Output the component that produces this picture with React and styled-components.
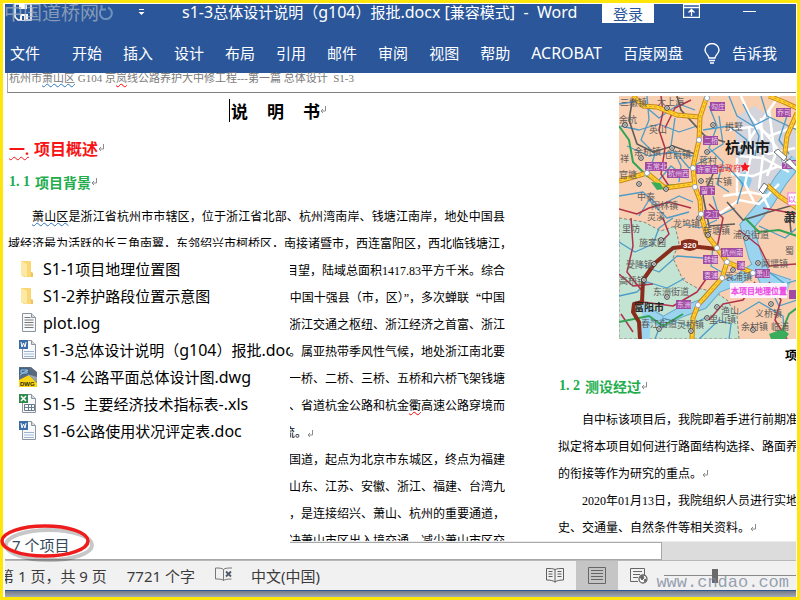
import React from "react";
import styled, { createGlobalStyle, css } from "styled-components";

const GlobalStyle = createGlobalStyle`
  * { box-sizing: border-box; }
  html, body { margin: 0; padding: 0; overflow: hidden; }
  body { font-family: "Noto Sans", "Noto Sans CJK SC", sans-serif; font-size: 15px; color: #000; }
  button { font: inherit; color: inherit; background: none; border: 0; padding: 0; margin: 0; white-space: nowrap; }
  svg { flex: none; }
`;

const BLUE = "#2b579a";

const Frame = styled.div`
  display: flex;
  flex-direction: column;
  height: 100vh;
  border: 3px solid #ffe60a;
  padding: 1px 1px 0 2px;
  background: #fff;
  position: relative;
`;

const Ribbon = styled.header`
  background: ${BLUE};
  color: #fff;
  flex: none;
`;

const TitleBar = styled.div`
  display: flex;
  align-items: flex-start;
  height: 29px;
  padding-left: 9px;
`;

const QuickTools = styled.div`
  display: flex;
  align-items: center;
  height: 17px;
  width: 168px;
`;

const ToolButton = styled.button`
  display: flex;
  align-items: center;
  margin-right: ${(p) => p.$after || 0}px;
`;

const Title = styled.h1`
  margin: 0;
  font-size: 15px;
  font-weight: 400;
  line-height: 17px;
  white-space: pre;
  flex: none;
`;

const Latin = styled.span`
  font-size: 16px;
`;

const WindowTools = styled.div`
  display: flex;
  align-items: flex-start;
  margin-left: auto;
  padding-right: 40px;
`;

const LoginButton = styled.button`
  width: 52px;
  height: 19px;
  background: #fff;
  color: ${BLUE};
  line-height: 16px;
  margin-right: 29px;
`;

const Menu = styled.nav`
  display: flex;
  align-items: center;
  height: 40px;
  gap: 21px;
  padding-left: 5px;
`;

const MenuItem = styled.button`
  display: flex;
  align-items: center;
  gap: 12px;
  line-height: 20px;
  margin-right: ${(p) => (p.$first ? 11 : 0)}px;
`;

const RunningHead = styled.div`
  flex: none;
  height: 20px;
  margin-left: 2px;
  padding-left: 1px;
  border-left: 1px solid #aaa;
  border-bottom: 1px solid #808080;
  color: #7a7a7a;
  font-family: "Liberation Serif", "Noto Sans CJK SC", sans-serif;
  font-size: 11px;
  line-height: 11px;
  white-space: pre;
`;

const Wavy = styled.span`
  text-decoration: underline wavy ${(p) => p.$tone} 1px;
  text-underline-offset: 1px;
`;

const Workspace = styled.main`
  flex: 1;
  min-height: 0;
  display: flex;
  flex-direction: column;
  position: relative;
`;

const Page = styled.article`
  flex: 1;
  min-height: 0;
  overflow: hidden;
  display: grid;
  grid-template-columns: minmax(0, 497fr) minmax(0, 238fr);
  column-gap: 53px;
  padding-left: 3px;
  font-family: "Liberation Serif", "Noto Sans CJK SC", serif;
`;

const Column = styled.section`
  min-width: 0;
  overflow: hidden;
  padding-top: ${(p) => p.$top}px;
`;

const DocTitle = styled.h2`
  display: flex;
  align-items: center;
  margin: 0 0 8px 221px;
  height: 26px;
  font-size: 17px;
  gap: 19px;
`;

const Caret = styled.i`
  width: 1px;
  height: 23px;
  background: #000;
  margin-right: -18px;
`;

const Marked = styled.span`
  display: inline-flex;
  align-items: center;
`;

const Heading = styled.h3`
  display: flex;
  align-items: center;
  margin: 0 0 ${(p) => p.$after || 0}px;
  height: ${(p) => p.$height}px;
  font-size: ${(p) => p.$size}px;
  gap: 5px;
  padding-left: 1px;
  color: ${(p) => p.$tone};
`;

const Line = styled.p`
  margin: 0;
  height: 27px;
  font-size: 12px;
  line-height: 27px;
  white-space: nowrap;
  padding-left: ${(p) => (p.$indent ? 24 : 0)}px;
  ${(p) => p.$fill && css`text-align-last: justify; white-space: normal;`}
  ${(p) => p.$end && css`display: flex; justify-content: flex-end;`}
`;

const WideQuote = styled.span`
  font-family: "Noto Sans CJK SC", sans-serif;
`;

const Tail = styled.span`
  display: flex;
  align-items: center;
  width: 222px;
`;

const MapFigure = styled.figure`
  margin: 0 0 0 61px;
`;

const MapDrawing = styled.svg`
  display: block;
  width: 178px;
  height: 243px;
`;

const Caption = styled.figcaption`
  padding-left: 166px;
  font-size: 12px;
  font-weight: 700;
  line-height: 34px;
  white-space: nowrap;
`;

const ScrollTrack = styled.div`
  flex: none;
  height: 19px;
  background: #dcdcdc;
  border-top: 1px solid #ececec;
`;

const ScrollThumb = styled.div`
  width: 83%;
  height: 18px;
  background: #fff;
  border: 1px solid #a8a8a8;
`;

const FilePanel = styled.aside`
  position: absolute;
  left: 0;
  top: 154px;
  bottom: 1px;
  width: 285px;
  background: #fff;
  overflow: hidden;
  padding: 8px 0 0 14px;
`;

const FileList = styled.ul`
  list-style: none;
  margin: 0;
  padding: 0;
`;

const FileRow = styled.li`
  height: 27px;
`;

const FileLink = styled.a`
  display: flex;
  align-items: center;
  gap: 6px;
  height: 27px;
  color: #000;
  text-decoration: none;
  white-space: pre;
`;

const CountBadge = styled.output`
  position: absolute;
  left: -5px;
  bottom: -3px;
  width: 98px;
  height: 44px;
  padding: 16px 0 0 12px;
  line-height: 20px;
  color: #34495e;
  white-space: nowrap;
`;

const Ring = styled.svg`
  position: absolute;
  left: 0;
  top: 0;
  width: 98px;
  height: 44px;
  overflow: visible;
`;

const StatusBar = styled.footer`
  flex: none;
  display: flex;
  align-items: center;
  height: 31px;
  background: #f1f1f1;
  border-top: 1px solid #b8b8b8;
  border-bottom: 1px solid ${BLUE};
  color: #3b3b3b;
  overflow: hidden;
`;

const StatusText = styled.span`
  flex: none;
  white-space: pre;
  margin-left: ${(p) => p.$before}px;
`;

const ViewTools = styled.div`
  display: flex;
  align-items: center;
  align-self: stretch;
  margin-left: auto;
`;

const ViewButton = styled.button`
  display: flex;
  align-items: center;
  justify-content: center;
  width: 42px;
  align-self: stretch;
  background: ${(p) => (p.$on ? "#c5c5c5" : "transparent")};
`;

const Zoom = styled.input`
  appearance: none;
  width: 132px;
  height: 15px;
  margin: 0 0 0 4px;
  background: linear-gradient(#8a8a8a, #8a8a8a) center / 100% 1px no-repeat;
  &::-webkit-slider-thumb {
    appearance: none;
    width: 6px;
    height: 14px;
    background: #6a6a6a;
  }
`;

const Underlay = styled.div`
  flex: none;
  height: 6px;
  background: linear-gradient(#747a84, #a3abb8);
`;

const Watermark = styled.div`
  position: absolute;
  white-space: nowrap;
  pointer-events: none;
  ${(p) =>
    p.$corner === "top"
      ? css`left: 1px; top: 0; font-size: 19px; line-height: 20px; color: rgba(165, 178, 195, 0.75);`
      : css`right: 8px; bottom: 4px; font-family: "Liberation Mono", monospace; font-size: 17px; line-height: 20px; color: rgba(125, 137, 158, 0.8);`}
`;

const Mixed = ({ text }) =>
  text.split(/([\x20-\x7e]+)/).map((part, i) => (i % 2 ? <Latin key={i}>{part}</Latin> : part));

const Return = () => (
  <svg width="6" height="8" viewBox="0 0 6 8" fill="none" stroke="#8c8c8c" aria-hidden="true">
    <path d="M5.5 0v5H1M3 3L1 5l2 2" />
  </svg>
);

const SaveIcon = () => (
  <svg width="18" height="17" viewBox="0 0 18 17" aria-hidden="true">
    <path d="M1 0h16v16H4l-3-3z" fill="none" stroke="#fff" strokeWidth="1.6" />
    <path d="M5 0h8v5H5zM6 10h8v6H6z" fill="#fff" />
    <path d="M8 12h2v4H8z" fill={BLUE} />
  </svg>
);

const RedoIcon = () => (
  <svg width="16" height="16" viewBox="0 0 16 16" fill="none" stroke="#6f93bd" strokeWidth="2" aria-hidden="true">
    <path d="M10 2.5a6 6 0 1 1-6 1M3.500 0v4.500H8" />
  </svg>
);

const CustomizeIcon = () => (
  <svg width="7" height="7" viewBox="0 0 7 7" aria-hidden="true">
    <path d="M1 0h5v1H1zM0.500 3h6L3.500 6z" fill="#fff" />
  </svg>
);

const RibbonOptionsIcon = () => (
  <svg width="17" height="14" viewBox="0 0 17 14" fill="none" stroke="#fff" aria-hidden="true">
    <path d="M.5.5h16v13H.5zM.5 3.500h16M8.500 12V6M5.500 8.500l3-3 3 3" strokeWidth="1.300" />
  </svg>
);

const BulbIcon = () => (
  <svg width="16" height="21" viewBox="0 0 16 21" fill="none" stroke="#fff" strokeWidth="1.400" aria-hidden="true">
    <path d="M5 15c0-3-4-4-4-8a7 6.500 0 0 1 14 0c0 4-4 5-4 8zM5 17.500h6M6 20h4" />
  </svg>
);

const ProofIcon = () => (
  <svg width="18" height="15" viewBox="0 0 18 15" fill="none" stroke="#777" aria-hidden="true">
    <path d="M8.500 2.500v11M8.500 2.500C7 1 4 1 .5 1v11c3.500 0 6.500 0 8 1.500 1-1 4-1.500 8-1.500M8.500 2.500C10 1 13 1 17 1" />
    <path d="M11 4.500l5 5M16 4.500l-5 5" stroke="#4d5a6b" strokeWidth="1.800" />
  </svg>
);

const ReadIcon = () => (
  <svg width="18" height="15" viewBox="0 0 18 15" fill="none" stroke="#5f5f5f" aria-hidden="true">
    <path d="M9 1.500v13M9 1.500C7 .5 4 .5.500 .5v11.500c3.500 0 6.500.5 8.500 2 2-1.500 5-2 8.500-2V.5C14 .5 11 .5 9 1.500" />
    <path d="M2.500 3.500h4M2.500 6h4M2.500 8.500h4M11.500 3.500h4M11.500 6h4M11.500 8.500h4" />
  </svg>
);

const PrintIcon = () => (
  <svg width="18" height="17" viewBox="0 0 18 17" fill="none" stroke="#666" aria-hidden="true">
    <path d="M.5.5h17v16H.5zM3 3.500h12M3 6.500h12M3 9.500h12M3 12.500h12" />
  </svg>
);

const WebIcon = () => (
  <svg width="18" height="16" viewBox="0 0 18 16" fill="none" stroke="#666" aria-hidden="true">
    <path d="M8 13.500H.5V.5h14V7M3 3.500h9M3 6.500h7M3 9.500h5" />
    <circle cx="13" cy="11" r="4" fill="#fff" strokeWidth="1.300" />
    <path d="M10 9l3-1 1 2-2 2zM14 12l2-1-1 3z" fill="#666" />
  </svg>
);

const FolderIcon = () => (
  <svg width="18" height="18" viewBox="0 0 18 18" aria-hidden="true">
    <path d="M2 1h10v11l2 1v4H5l-3-2z" fill="#f9d775" />
    <path d="M2 1l6 3v13l-6-2z" fill="#fde9a6" />
    <path d="M12 2v10l2 1v4h-2" fill="#efc45c" />
  </svg>
);

const SheetIcon = ({ kind }) => (
  <svg width="18" height="19" viewBox="0 0 18 19" aria-hidden="true">
    <path d="M3.500 .5h9l4 4v14h-13z" fill="#f7f9fb" stroke="#8c949e" />
    <path d="M12.500 .5v4h4" fill="#d5dbe2" stroke="#8c949e" />
    {kind === "log" && <path d="M5.500 4.500h6M5.500 7h9M5.500 9.500h9M5.500 12h9M5.500 14.500h9" stroke="#777" />}
    {kind === "doc" && (
      <>
        <path d="M5 11.500h10M5 16.500h10" stroke="#9fb3cf" />
        <path d="M5 13h10v2H5z" fill="#c9dcef" />
        <path d="M0 0h9v9H0z" fill="#3d6da8" />
        <path d="M2 2l1 5 1.500-4L6 7l1-5" fill="none" stroke="#fff" />
      </>
    )}
    {kind === "xls" && (
      <>
        <path d="M5.500 10.500h10v6h-10zM5.500 13.500h10M9.500 10v7M12.500 10v7" fill="none" stroke="#6a7a8a" />
        <path d="M0 0h9v9H0z" fill="#2f8a4e" />
        <path d="M2 2l5 5M7 2L2 7" stroke="#fff" strokeWidth="1.500" />
      </>
    )}
  </svg>
);

const DwgIcon = () => (
  <svg width="18" height="20" viewBox="0 0 18 20" aria-hidden="true">
    <path d="M0 0h12l6 5v15H0z" fill="#5b6b7b" />
    <path d="M0 1h9l3 7H0z" fill="#3b6790" />
    <path d="M2 3h6v3H2zM1 8l8-5" fill="none" stroke="#a9c6de" />
    <path d="M0 13L10 8l8 8v4H0z" fill="#fbd514" />
    <path d="M8 7l10 3v5z" fill="#9aa6b0" />
    <text x="1" y="19" fontSize="6" fontWeight="700" fontFamily="Liberation Sans" fill="#2b2b10">DWG</text>
  </svg>
);

const icons = {
  folder: <FolderIcon />,
  log: <SheetIcon kind="log" />,
  doc: <SheetIcon kind="doc" />,
  xls: <SheetIcon kind="xls" />,
  dwg: <DwgIcon />,
};

const files = [
  ["folder", "S1-1项目地理位置图"],
  ["folder", "S1-2养护路段位置示意图"],
  ["log", "plot.log"],
  ["doc", "s1-3总体设计说明（g104）报批.docx"],
  ["dwg", "S1-4 公路平面总体设计图.dwg"],
  ["xls", "S1-5  主要经济技术指标表-.xls"],
  ["doc", "S1-6公路使用状况评定表.doc"],
];

const menus = ["文件", "开始", "插入", "设计", "布局", "引用", "邮件", "审阅", "视图", "帮助", "ACROBAT", "百度网盘"];

const yellowRoads = [
  "M14 0L24 10L38 11L58 19L80 21",
  "M88 0L81 21L80 44L74 71L76 91L81 104L82 119L88 139L98 152L108 166L134 177",
  "M108 166L103 182L79 209L74 222L73 243",
  "M0 85L28 77L46 92L74 88",
  "M150 0L165 6L178 12M178 17L168 40L165 64L178 72",
  "M148 89L160 100L178 112",
];
const blueStreams = [
  "M0 8L20 5L40 22L60 8L76 14", "M2 30L20 34L40 28L60 36L78 30", "M28 0L30 24L22 44L36 58L30 76",
  "M56 22L52 50L62 70L60 86", "M8 50L30 60L52 56L74 60", "M90 10L98 30L90 52L104 66L98 88L110 96",
  "M84 34L110 30L128 44L120 60", "M110 0L118 20L134 30L150 22", "M124 8L140 40L136 60", "M88 70L110 72L124 88L118 108",
  "M0 100L24 96L40 110L60 100L74 106", "M20 120L30 104L48 122L70 116", "M94 100L100 120L116 112",
  "M168 20L160 44L170 58", "M142 0L148 20L178 34", "M60 60L70 72L90 62", "M40 84L52 70L68 82", "M100 20L104 48L88 58",
  "M0 146L16 156L34 148L40 132L54 122", "M0 200L18 196L28 186L48 192L66 182", "M94 150L92 170L116 184", "M130 200L150 190L160 210L178 204",
  "M36 243L44 222L70 230L90 220", "M80 243L100 224L112 228L110 243", "M140 130L166 142L178 132", "M150 176L166 188L178 184",
  "M20 168L40 176L58 160L84 162", "M66 128L80 132L98 124", "M120 218L140 206L164 220L166 243",
];
const redRoads = [
  "M42 0L44 16L40 34L46 52L42 78L50 90", "M72 4L56 12L46 32", "M0 113L18 118L30 112L50 106L72 112",
  "M12 122L14 150L8 176L24 196", "M0 178L14 190L34 188", "M98 152L104 122L90 108", "M24 206L54 210L78 196L92 176",
  "M120 134L140 150L150 170L178 168", "M136 186L124 204L104 208L90 224", "M150 186L162 204L156 224L168 243",
  "M14 236L2 218", "M44 122L50 138L40 148", "M144 112L178 118",
];
const whiteRoads = [
  "M110 34L138 30L150 40L178 30", "M116 46L150 58L176 52", "M120 60L144 62L170 76", "M130 30L132 60L126 88L136 108",
  "M142 22L144 60L140 92L150 112", "M150 14L156 60L148 80", "M112 78L134 80L160 70", "M122 0L130 18L152 44L168 66",
  "M100 118L120 104L140 108L160 88", "M118 62L118 100", "M104 100L130 96L150 100", "M160 0L146 20L130 44",
];
const greyRoads = ["M14 0L10 24L18 48L34 56L54 50L76 58", "M94 78L84 100L90 130L116 128", "M58 0L62 14L86 40L106 46", "M108 106L124 124L150 116L178 108", "M170 116L172 136"];
const greenRoads = ["M0 30L10 44L14 66L28 80L44 90L70 88", "M0 226L30 220L44 230L64 218", "M160 243L170 218L178 212", "M126 122L140 136L160 134L178 140"];
const towns = [[48, 12], [94, 29], [6, 29], [53, 52], [88, 56], [22, 62], [20, 88], [47, 93], [82, 85], [80, 122], [89, 139], [42, 144], [35, 168], [25, 184], [48, 201], [98, 211], [152, 208], [127, 142], [114, 174], [40, 233], [88, 222], [139, 167], [168, 124], [72, 235], [134, 234]];
const purpleTags = [
  [91, 6, "勾庄"], [157, 12, "乔司"], [84, 40, "二桥"], [26, 66, "五常北"], [48, 73, "杭州西"], [77, 69, "许家台"],
  [81, 90, "留下"], [85, 114, "之江"], [102, 152, "杭州南"], [84, 159, "转塘"], [84, 175, "袁浦"], [57, 204, "东洲"], [136, 173, "萧山"], [118, 165, "浦"], [163, 64, "九堡"],
];
const labels = [
  [1, 10, "三墩镇"], [38, 9, "大上海"], [0, 27, "余杭"], [30, 37, "英山"], [1, 66, "祥"], [15, 59, "余杭镇"], [45, 62, "仓前镇"],
  [0, 82, "官塘"], [18, 104, "中泰"], [32, 113, "闲林镇"], [86, 89, "宿下镇"], [80, 68, "蒋村"], [106, 34, "拱墅"], [28, 124, "灵溪"],
  [3, 136, "里坊"], [20, 150, "施家园"], [7, 172, "受降镇"], [0, 188, "高桥镇"], [34, 199, "东洲街道"], [54, 131, "龙坞镇"],
  [84, 138, "转塘镇"], [114, 142, "浦沿街道"], [142, 171, "闻堰镇"], [106, 184, "袁浦镇"], [90, 227, "里山镇"], [102, 218, "渔山"],
  [136, 221, "义桥镇"], [122, 234, "余村镇"], [152, 234, "临浦"], [22, 231, "春江街道"], [58, 232, "灵桥镇"], [166, 158, "蜀"],
];

const RegionMap = () => (
  <MapDrawing viewBox="0 0 178 243" role="img" aria-label="杭州市地图" fill="none">
    <path d="M0 0h178v243H0z" fill="#f8cfb0" />
    <path d="M0 122L25 126L42 135L56 130L60 147L54 162L64 184L78 192L96 196L108 204L118 220L120 243L0 243z" fill="#c3e4d2" stroke="#8b8178" strokeDasharray="3 2" />
    <path d="M118 20L136 10L152 22L178 36L178 66L160 80L142 98L122 88L116 60z" fill="#d3d4dc" />
    <path d="M178 64L162 84L148 106L138 118L128 130L136 160L146 182L170 190" stroke="#6aa9ce" strokeWidth="14" />
    <path d="M178 64L162 84L148 106L138 118L128 130L136 160L146 182L170 190" stroke="#9bd4ef" strokeWidth="12" />
    <path d="M136 172L118 184L98 192L84 208L62 216L44 226L28 216" stroke="#6aa9ce" strokeWidth="11" />
    <path d="M136 172L118 184L98 192L84 208L62 216L44 226L28 216L26 243" stroke="#9bd4ef" strokeWidth="9" />
    <path d="M120 78l8-2 5 8-3 8-9-3z" fill="#87caea" />
    {whiteRoads.map((d) => <path key={d} d={d} stroke="#fff" strokeWidth="2.500" />)}
    {blueStreams.map((d) => <path key={d} d={d} stroke="#4d9cc9" strokeWidth="1.300" strokeLinejoin="round" />)}
    {greyRoads.map((d) => <path key={d} d={d} stroke="#5e5c5a" strokeWidth="1.600" />)}
    {redRoads.map((d) => <path key={d} d={d} stroke="#b1324a" strokeWidth="1.500" strokeLinejoin="round" />)}
    {greenRoads.map((d) => <path key={d} d={d} stroke="#33a457" strokeWidth="2" strokeLinejoin="round" />)}
    <path d="M21 243L20 226L14 216L15 208L23 206L24 184L36 167L54 152L71 150L98 153" stroke="#8a2c1c" strokeWidth="4" strokeLinejoin="round" />
    {yellowRoads.map((d) => (
      <g key={d} strokeLinejoin="round">
        <path d={d} stroke="#c8861a" strokeWidth="5" />
        <path d={d} stroke="#ffd52d" strokeWidth="3" />
        <path d={d} stroke="#ef9b25" strokeWidth="1" strokeDasharray="3 2" />
      </g>
    ))}
    <path d="M32 86l9 1 4 6-7 1z" fill="#39ad5c" />
    <path d="M150 238l14-5 6 5-4 5h-14z" fill="#39ad5c" />
    <path d="M62 145q8-4 17 0v7q-8 6-17 0z" fill="#8a2c1c" />
    <text x="64" y="152" fontSize="8" fill="#fff" fontFamily="Liberation Sans" fontWeight="700">320</text>
    <g fontFamily="Noto Sans CJK SC" fontSize="9" fill="#625b59">
      {labels.map(([x, y, t]) => <text key={t} x={x} y={y}>{t}</text>)}
    </g>
    {towns.map(([x, y]) => (
      <g key={`${x}-${y}`}>
        <circle cx={x} cy={y} r="2.300" fill="#fff" stroke="#333" />
        <circle cx={x} cy={y} r=".8" fill="#222" />
      </g>
    ))}
    {purpleTags.map(([x, y, t]) => (
      <g key={t}>
        <rect x={x} y={y} width={t.length * 7 + 1} height="9" fill="#a04ba3" />
        <text x={x + 1} y={y + 7} fontSize="7" fill="#edcdec" fontFamily="Noto Sans CJK SC">{t}</text>
      </g>
    ))}
    {[[88, 2], [80, 44], [74, 72], [28, 77], [76, 91], [82, 118], [98, 152], [108, 166], [103, 182], [79, 209], [134, 177], [165, 64]].map(([x, y]) => (
      <circle key={`${x}/${y}`} cx={x} cy={y} r="2.600" fill="#fff" stroke="#97a7bb" />
    ))}
    <path d="M155 56l4-3 9 8-3 4zM140 94l5-7 4 3-5 8zM166 66l5-3 7 8v5z" fill="#fff" stroke="#6b747c" />
    <g fontFamily="Noto Sans CJK SC">
      <text x="106" y="57" fontSize="15" fontWeight="700" fill="#171717">杭州市</text>
      <text x="98" y="75" fontSize="8" fill="#df303b">省政府</text>
      <text x="15" y="215" fontSize="10" fontWeight="700" fill="#252525">富阳市</text>
      <text x="165" y="126" fontSize="12" fontWeight="700" fill="#333">萧</text>
    </g>
    <path d="M126 66l1.500 3 3.500.5-2.500 2.500.5 3.500-3-1.700-3 1.700.5-3.500-2.500-2.500 3.500-.5z" fill="#f5151b" />
    <rect x="169" y="97" width="10" height="12" fill="#fff" stroke="#ef7ae8" />
    <text x="169" y="106" fontSize="8" fill="#e33bdc" fontFamily="Noto Sans CJK SC">以</text>
    <rect x="111" y="187" width="57" height="15" fill="#fff2fc" />
    <text x="112" y="198" fontSize="8" fill="#ec3fe5" stroke="#ec3fe5" strokeWidth=".3" fontFamily="Noto Sans CJK SC">本项目地理位置</text>
    <rect x="170" y="194" width="8" height="9" fill="#a04ba3" />
  </MapDrawing>
);

export default function App() {
  return (
    <Frame>
      <GlobalStyle />
      <Ribbon>
        <TitleBar>
          <QuickTools>
            <ToolButton aria-label="保存" $after={66}><SaveIcon /></ToolButton>
            <ToolButton aria-label="恢复" $after={24}><RedoIcon /></ToolButton>
            <ToolButton aria-label="自定义快速访问工具栏"><CustomizeIcon /></ToolButton>
          </QuickTools>
          <Title><Mixed text="s1-3总体设计说明（g104）报批.docx [兼容模式]  -  Word" /></Title>
          <WindowTools>
            <LoginButton>登录</LoginButton>
            <ToolButton aria-label="功能区显示选项" $after={43}><RibbonOptionsIcon /></ToolButton>
            <ToolButton aria-label="最小化">
              <svg width="13" height="16" viewBox="0 0 13 16" aria-hidden="true"><path d="M0 7.500h13" stroke="#fff" /></svg>
            </ToolButton>
          </WindowTools>
        </TitleBar>
        <Menu>
          {menus.map((m, i) => <MenuItem key={m} $first={i === 0}><span><Mixed text={m} /></span></MenuItem>)}
          <MenuItem><BulbIcon />告诉我</MenuItem>
        </Menu>
      </Ribbon>

      <RunningHead>
        杭州市<Wavy $tone="#2e75b6">萧山区</Wavy> G104 京<Wavy $tone="#f00">岚</Wavy>线公路养护大中修工程---第一篇 总体设计  S1-3
      </RunningHead>

      <Workspace>
        <Page>
          <Column $top={4}>
            <DocTitle><Caret /><span>说</span><span>明</span><Marked>书<Return /></Marked></DocTitle>
            <Heading $size={16} $height={34} $tone="#f81414"><Wavy $tone="#f81414">一.</Wavy><Marked>项目概述<Return /></Marked></Heading>
            <Heading $size={14} $height={34} $after={5} $tone="#22ac4b"><span>1. 1</span><Marked>项目背景<Return /></Marked></Heading>
            <Line $indent $fill><Wavy $tone="#2e75b6">萧山区</Wavy>是浙江省杭州市市辖区，位于浙江省北部、杭州湾南岸、钱塘江南岸，地处中国县</Line>
            <Line>域经济最为活跃的长三角南翼，东邻绍兴市柯桥区，南接诸暨市，西连富阳区，西北临钱塘江，</Line>
            <Line $end>目望，陆域总面积1417.83平方千米。综合</Line>
            <Line $end>中国十强县（市，区）”，多次蝉联<WideQuote>“</WideQuote>中国</Line>
            <Line $end>浙江交通之枢纽、浙江经济之首富、浙江</Line>
            <Line $end>。属亚热带季风性气候，地处浙江南北要</Line>
            <Line $end>一桥、二桥、三桥、五桥和六桥飞架钱塘</Line>
            <Line $end>、省道杭金公路和杭金<Wavy $tone="#f00">衢</Wavy>高速公路穿境而</Line>
            <Line $end><Tail>流。<Return /></Tail></Line>
            <Line $end>国道，起点为北京市东城区，终点为福建</Line>
            <Line $end>山东、江苏、安徽、浙江、福建、台湾九</Line>
            <Line $end>，是连接绍兴、萧山、杭州的重要通道，</Line>
            <Line $end>决萧山市区出入境交通，减少萧山市区交</Line>
          </Column>
          <Column $top={3}>
            <MapFigure>
              <RegionMap />
              <Caption>项目地理位置图</Caption>
            </MapFigure>
            <Heading $size={14} $height={26} $after={8} $tone="#22ac4b"><span>1. 2</span><Marked>测设经过<Return /></Marked></Heading>
            <Line $indent>自中标该项目后，我院即着手进行前期准</Line>
            <Line>拟定将本项目如何进行路面结构选择、路面养</Line>
            <Line>的衔接等作为研究的重点。<Return /></Line>
            <Line $indent>2020年01月13日，我院组织人员进行实地</Line>
            <Line>史、交通量、自然条件等相关资料。<Return /></Line>
          </Column>
        </Page>
        <ScrollTrack><ScrollThumb /></ScrollTrack>
        <FilePanel>
          <FileList>
            {files.map(([kind, name]) => (
              <FileRow key={name}><FileLink href="#">{icons[kind]}<span><Mixed text={name} /></span></FileLink></FileRow>
            ))}
          </FileList>
        </FilePanel>
        <CountBadge>
          7 个项目
          <Ring viewBox="0 0 98 44" fill="none" aria-hidden="true">
            <ellipse cx="49" cy="26" rx="43" ry="15" stroke="#000" strokeOpacity=".22" strokeWidth="4" />
            <ellipse cx="45" cy="22" rx="43" ry="15" stroke="#ee1c1c" strokeWidth="3.500" />
          </Ring>
        </CountBadge>
      </Workspace>

      <StatusBar>
        <StatusText $before={-6}>第 1 页，共 9 页</StatusText>
        <StatusText $before={20}>7721 个字</StatusText>
        <StatusText $before={20}><ProofIcon /></StatusText>
        <StatusText $before={18}>中文(中国)</StatusText>
        <ViewTools>
          <ViewButton aria-label="阅读视图"><ReadIcon /></ViewButton>
          <ViewButton aria-label="页面视图" $on><PrintIcon /></ViewButton>
          <ViewButton aria-label="Web 版式视图"><WebIcon /></ViewButton>
          <Zoom type="range" min="0" max="100" defaultValue="38" aria-label="缩放" />
        </ViewTools>
      </StatusBar>
      <Underlay />
      <Watermark $corner="top">中国道桥网</Watermark>
      <Watermark>www.cndao.com</Watermark>
    </Frame>
  );
}
